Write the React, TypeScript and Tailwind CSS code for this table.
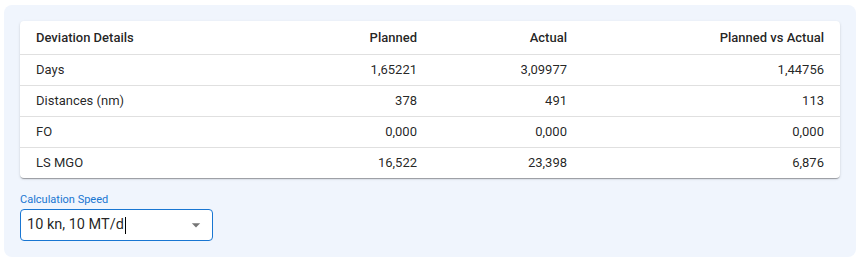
const rows = [
  { label: "Days", planned: "1,65221", actual: "3,09977", diff: "1,44756" },
  { label: "Distances (nm)", planned: "378", actual: "491", diff: "113" },
  { label: "FO", planned: "0,000", actual: "0,000", diff: "0,000" },
  { label: "LS MGO", planned: "16,522", actual: "23,398", diff: "6,876" },
]

export default function App() {
  return (
    <div className="w-[863px] h-[265px] bg-white pt-[5px] pl-[4px] font-['Roboto',sans-serif] text-[rgba(0,0,0,0.87)]">
      <div className="w-[852px] h-[252px] rounded-lg bg-[#f0f5fd] pt-4 px-4">
        <div className="w-[820px] bg-white rounded shadow-[0_2px_1px_-1px_rgba(0,0,0,0.2),0_1px_1px_0_rgba(0,0,0,0.14),0_1px_3px_0_rgba(0,0,0,0.12)] overflow-hidden">
          <table className="w-full border-collapse text-[13px] table-fixed">
            <colgroup>
              <col className="w-[263px]" />
              <col className="w-[150px]" />
              <col className="w-[150px]" />
              <col className="w-[257px]" />
            </colgroup>
            <thead>
              <tr className="h-[33px] border-b border-[#e0e0e0]">
                <th className="px-4 text-left font-medium">Deviation Details</th>
                <th className="px-4 text-right font-medium">Planned</th>
                <th className="px-4 text-right font-medium">Actual</th>
                <th className="px-4 text-right font-medium">Planned vs Actual</th>
              </tr>
            </thead>
            <tbody>
              {rows.map((r, i) => (
                <tr
                  key={r.label}
                  className={`h-[31px] ${i < rows.length - 1 ? "border-b border-[#e0e0e0]" : ""}`}
                >
                  <td className="px-4 text-left">{r.label}</td>
                  <td className="px-4 text-right">{r.planned}</td>
                  <td className="px-4 text-right">{r.actual}</td>
                  <td className="px-4 text-right">{r.diff}</td>
                </tr>
              ))}
            </tbody>
          </table>
        </div>

        <div className="mt-[14px]">
          <div className="text-[11px] leading-[16px] text-[#1976d2]">Calculation Speed</div>
          <div className="mt-[1px] w-[193px] h-[32px] border border-[#1976d2] rounded flex items-center pl-[6px] pr-[6px] bg-white">
            <span className="text-[14.5px] text-[rgba(0,0,0,0.87)]">10 kn, 10 MT/d</span>
            <span className="w-px h-[17px] bg-black ml-[1px]" />
            <svg className="ml-auto" width="20" height="20" viewBox="0 0 24 24">
              <path d="M7 10l5 5 5-5z" fill="rgba(0,0,0,0.54)" />
            </svg>
          </div>
        </div>
      </div>
    </div>
  )
}
